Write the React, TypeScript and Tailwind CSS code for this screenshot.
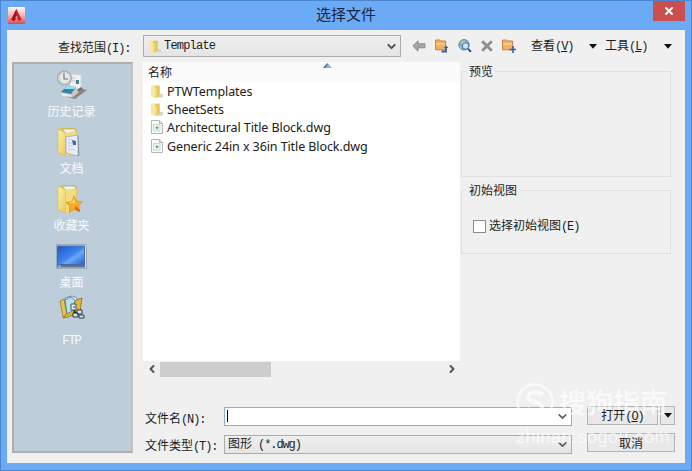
import type { ReactNode } from "react";
import { ChevronDown, ChevronLeft, ChevronRight, X } from "lucide-react";

const places = [
  { label: "历史记录", icon: HistoryIcon },
  { label: "文档", icon: DocumentsIcon },
  { label: "收藏夹", icon: FavoritesIcon },
  { label: "桌面", icon: DesktopIcon },
  { label: "FTP", icon: FtpIcon },
];

const files = [
  { name: "PTWTemplates", folder: true },
  { name: "SheetSets", folder: true },
  { name: "Architectural Title Block.dwg", folder: false },
  { name: "Generic 24in x 36in Title Block.dwg", folder: false },
];

// Half-width latin text that sits next to the 12px chinese labels
function Latin({ children }: { children: ReactNode }) {
  return <span className="font-['Liberation_Mono',monospace] text-[12px] tracking-[-1.1px]">{children}</span>;
}

function AppIcon() {
  return (
    <svg width="17" height="17" viewBox="0 0 17 17">
      <defs>
        <linearGradient id="app" x1="0" y1="0" x2="0" y2="1">
          <stop offset="0" stopColor="#fdfafa" />
          <stop offset="0.5" stopColor="#f2b6b4" />
          <stop offset="1" stopColor="#d84a4c" />
        </linearGradient>
      </defs>
      <rect width="17" height="17" rx="1" fill="url(#app)" />
      <path d="M8.4 2 13.8 12.8 10.8 14 8.5 10.7 6.2 14 3.2 12.8Z" fill="#c9242c" />
      <path d="M8.4 2 8.5 10.7 6.2 14 3.2 12.8Z" fill="#a9101b" />
      <path d="M7 11 8.5 8.7 10 11Z" fill="#e99a9a" />
    </svg>
  );
}

function FolderIcon() {
  return (
    <svg width="14" height="15" viewBox="0 0 14 15" className="shrink-0">
      <path d="M6 10h7v3.5H6z" fill="#d8dad6" />
      <path d="M1 1.8 5 1v13L1 12.5Z" fill="#f7e9a4" />
      <path d="M5 1.8 9.8 1.5v11L5 14Z" fill="#e6c75c" />
      <path d="M4.5 4 6.8 4v9.5L5 14Z" fill="#f3dd80" />
      <path d="M9.3 10h3v3H7.5l1.8-1Z" fill="#ddd3ae" />
    </svg>
  );
}

function DwgIcon() {
  return (
    <svg width="12" height="14" viewBox="0 0 12 14" className="shrink-0">
      <path d="M.5.5h8l3 3v10H.5Z" fill="#fbfbfb" stroke="#b3b6b4" />
      <path d="M8.5.5v3h3" fill="none" stroke="#b3b6b4" />
      <path d="M2.5 4.5H9V11H2.5Z" fill="#eef5ee" stroke="#c8dccb" />
      <path d="M4.5 7.7h3M6 6.4v2.8" stroke="#5fa371" strokeWidth="1.3" />
    </svg>
  );
}

function HistoryIcon() {
  return (
    <svg width="32" height="32" viewBox="0 0 32 32">
      <path d="m5 26 10-9 16 4-12 9Z" fill="#8c8780" />
      <path d="m3 24 10-8 15 3-11 9Z" fill="#c9c8c2" />
      <path d="m14 5 11 1v14l-11-2Z" fill="#edf1ef" stroke="#d2dadd" />
      <path d="m5 23 6-6 9 1-5 7Z" fill="#2f83b5" />
      <path d="m8 20 3-3 9 1-2 2Z" fill="#9fe0ec" />
      <path d="m5 24 10 2 1 2-10-1Z" fill="#e8eef0" />
      <path d="M16 9h3M16 12h4" stroke="#b8c4c8" />
      <path d="M20 11h3v4h-3z" fill="#557d92" />
      <circle cx="8.5" cy="9" r="7" fill="#ccd5d6" stroke="#9ba8ab" strokeWidth="1.1" />
      <circle cx="8.5" cy="9" r="5" fill="#e6e9e2" />
      <path d="M8 4v6h4" fill="none" stroke="#6b7777" strokeWidth="1.1" />
      <path d="m21 21 4-3 2 2-4 3Z" fill="#6f7172" />
    </svg>
  );
}

function BigFolder({ children }: { children: ReactNode }) {
  return (
    <svg width="32" height="32" viewBox="0 0 32 32">
      <defs>
        <linearGradient id="folder" x1="0" y1="0" x2="1" y2="1">
          <stop offset="0" stopColor="#fcf2ad" />
          <stop offset="1" stopColor="#e8c95c" />
        </linearGradient>
      </defs>
      <path d="M3 2h16l2 2v23l-11 3-7-3Z" fill="#dfc569" />
      <path d="M6 3 19 3l1 3-10 2Z" fill="#eef2ec" stroke="#aa9752" strokeWidth=".6" />
      <path d="M2 3 10 7v23l-8-3Z" fill="url(#folder)" stroke="#cbb45c" strokeWidth=".6" />
      <path d="m10 7 10-2v22l-10 3Z" fill="#f2dc7d" />
      {children}
    </svg>
  );
}

function DocumentsIcon() {
  return (
    <BigFolder>
      <path d="m10 11 12-2v21l-12-3Z" fill="#e9edf9" stroke="#a3abc3" strokeWidth=".8" />
      <path d="m12 14 4-.5M12 17h4M12 20h5M12 23l7 1" stroke="#cdc6da" />
      <path d="m16 14 4 1v4h-3Z" fill="#416d9e" />
      <path d="m22 10 1 19-2 1" fill="none" stroke="#8993a5" />
    </BigFolder>
  );
}

function FavoritesIcon() {
  return (
    <BigFolder>
      <path
        d="m18 13 2.5 5.3 5.8.4-3.9 4.3 1.3 5.8-5.2-2.5-5.2 3.1.4-5.8-3.4-4.1 5.8-1Z"
        fill="#f7ad28"
        stroke="#d98a22"
        strokeWidth=".7"
      />
      <path d="m18 15 1.3 4.8-3 .4-4-.8 3.8-.5Z" fill="#ffe05c" />
      <path d="m19.3 23 4.3 3.2v2.5l-5.1-2.4Z" fill="#df6920" />
    </BigFolder>
  );
}

function DesktopIcon() {
  return (
    <svg width="32" height="26" viewBox="0 0 32 26" className="mt-[3px]">
      <defs>
        <linearGradient id="screen" x1="0" y1="0" x2="1" y2="1">
          <stop offset="0" stopColor="#2456c4" />
          <stop offset="0.5" stopColor="#3c83ee" />
          <stop offset="0.62" stopColor="#6aa9f7" />
          <stop offset="1" stopColor="#1f5fd8" />
        </linearGradient>
      </defs>
      <rect x=".5" y=".5" width="30" height="24" fill="#d9e6ec" stroke="#9aabb9" />
      <rect x="1.5" y="2" width="27" height="18.5" fill="url(#screen)" stroke="#4a68a8" />
      <path d="M1 21h28v2.5H1z" fill="#5c6e8a" />
      <path d="M2 22h3" stroke="#b9cbdc" />
    </svg>
  );
}

function FtpIcon() {
  return (
    <svg width="26" height="26" viewBox="0 0 26 26">
      <path d="M1 6 5 4l3 16-4 2Z" fill="#e7c551" stroke="#927a2c" strokeWidth=".8" />
      <path d="m6 3 7-2 5 2 4 15-13 2Z" fill="#e4f1f7" stroke="#587b97" strokeWidth=".8" />
      <path d="m17 5 6-2-2 14-12 5-5 1 7-9Z" fill="#e0b537" stroke="#866c28" strokeWidth=".8" />
      <path d="m6 5 6-3 4 3-3 11-5 3Z" fill="#b8dfef" stroke="#4f7488" strokeWidth=".8" />
      <path d="M12 9h5v6h-5z" fill="#e8eef0" stroke="#34566a" />
      <path d="M14 12h2M15 15v4h4" stroke="#263d4d" />
      <path d="M18 15h5v4h-5zM14 18h5v4h-5zM20 20h5v3h-5z" fill="#dce4ec" stroke="#263852" />
    </svg>
  );
}

function BackIcon() {
  return (
    <svg width="14" height="12" viewBox="0 0 14 12">
      <path d="M.8 6 6 .8v3h7v4H6v3.4Z" fill="#a8a8a8" stroke="#8b8b8b" />
    </svg>
  );
}

function ToolFolder({ children }: { children: ReactNode }) {
  return (
    <svg width="14" height="14" viewBox="0 0 14 14">
      <path d="M.6 1h4l1.2 1H10.6v8.8H.6Z" fill="#f4b061" stroke="#bd8448" />
      <path d="M1 4.2h9v1.4H1z" fill="#ffd393" />
      {children}
    </svg>
  );
}

function SearchWebIcon() {
  return (
    <svg width="14" height="14" viewBox="0 0 14 14">
      <circle cx="6" cy="5.8" r="5.2" fill="#78a9cf" stroke="#6689a5" />
      <path d="M2 3.8 4 1.5l4 .2-1 2-3 2ZM1 7l3 1-1 2Z" fill="#a9c9a5" />
      <circle cx="7.6" cy="7" r="3.2" fill="#cfe5f5" stroke="#4b78a9" />
      <path d="m10 9.7 3 3.2" stroke="#334e98" strokeWidth="2" />
    </svg>
  );
}

function DeleteIcon() {
  return (
    <svg width="12" height="12" viewBox="0 0 12 12">
      <path d="m1.2 1.2 9.6 9.6M10.8 1.2 1.2 10.8" stroke="#8d8d8d" strokeWidth="2.8" />
    </svg>
  );
}

function Caret() {
  return (
    <svg width="8" height="5" viewBox="0 0 8 5">
      <path d="M0 0h8L4 4.8Z" fill="#111" />
    </svg>
  );
}

function GroupBox({ title, className, children }: { title: string; className: string; children?: ReactNode }) {
  return (
    <fieldset className={`relative border border-[#e0e0e0] ${className}`}>
      <legend className="absolute -top-[9px] left-[4px] bg-[#f0f0f0] px-[3px] leading-4">{title}</legend>
      {children}
    </fieldset>
  );
}

function Watermark() {
  return (
    <div className="pointer-events-none absolute left-[515px] top-[382px] w-[156px] text-white/65">
      <div className="flex h-[38px] items-center">
        <svg width="38" height="38" viewBox="0 0 38 38" fill="none" stroke="currentColor" className="shrink-0">
          <circle cx="19" cy="19" r="17.5" strokeWidth="2.4" />
          <path d="M27 11.5c-5-3-15-2.5-15 2.5 0 6 14 4 14 10 0 5-10 5-15 2" strokeWidth="4" />
        </svg>
        <span className="ml-[5px] whitespace-nowrap text-[27px] font-medium leading-[38px]">搜狗指南</span>
      </div>
      <div className="whitespace-nowrap font-['Liberation_Sans',sans-serif] text-[18px] leading-[32px] tracking-[0.5px]">
        zhinan.sogou.com
      </div>
    </div>
  );
}

export default function App() {
  return (
    <div className="relative flex h-[471px] w-[692px] flex-col overflow-hidden border border-[#4a86ce] bg-[#6babf5] px-[6px] pb-[7px] font-['Noto_Sans_CJK_SC',sans-serif] text-[12px] text-[#1c1c1c]">
      {/* Title bar */}
      <header className="flex h-[29px] shrink-0 items-start">
        <div className="mt-[6px] ml-px w-[45px]">
          <AppIcon />
        </div>
        <h1 className="flex-1 pt-[1px] pr-[14px] text-center text-[15px] leading-[24px] text-[#16263d]">选择文件</h1>
        <button className="flex h-[20px] w-[32px] items-center justify-center bg-[#c9504e]">
          <X size={12} strokeWidth={4} color="#fff" />
        </button>
      </header>

      <main className="flex flex-1 flex-col bg-[#f0f0f0]">
        {/* Look in + toolbar */}
        <div className="flex h-[32px] shrink-0 items-center">
          <div className="ml-[51px] w-[85px] pt-[3px] whitespace-nowrap">
            查找范围<Latin>(I):</Latin>
          </div>
          <div className="flex h-[22px] w-[258px] items-center border border-[#acacac] bg-linear-to-b from-[#efefef] to-[#e5e5e5] pl-[4px] pr-[2px]">
            <FolderIcon />
            <span className="ml-[2px] font-['Liberation_Mono',monospace] text-[12px] leading-none tracking-[-0.8px]">Template</span>
            <ChevronDown size={13} strokeWidth={3.6} className="ml-auto text-[#505050]" />
          </div>
          <div className="ml-[11px] flex w-[104px] items-center justify-between">
            <BackIcon />
            <ToolFolder>
              <path d="M6.5 12.5H11V8" fill="none" stroke="#365bab" strokeWidth="1.8" />
              <path d="m9 9 2.2-2.5L13.4 9Z" fill="#365bab" />
            </ToolFolder>
            <SearchWebIcon />
            <DeleteIcon />
            <ToolFolder>
              <path d="M11 7v7M7.5 10.5H14" stroke="#3d5bab" strokeWidth="1.6" />
            </ToolFolder>
          </div>
          <div className="ml-[15px] flex w-[66px] items-center justify-between">
            <span>查看<Latin>(<u>V</u>)</Latin></span>
            <Caret />
          </div>
          <div className="ml-[8px] flex w-[67px] items-center justify-between">
            <span>工具<Latin>(<u>L</u>)</Latin></span>
            <Caret />
          </div>
        </div>

        <div className="flex flex-1">
          {/* Places bar */}
          <nav className="ml-[5px] h-[391px] w-[121px] shrink-0 border-2 border-[#b0aeac] border-r-[#c4c2c0] bg-[#becdda] pt-[3px] text-white/90">
            {places.map((place) => (
              <div key={place.label} className="flex h-[57px] flex-col items-center">
                <div className={place.label === "FTP" ? "flex h-[35px] items-start pr-[2px]" : "flex h-[35px] items-center pr-[2px]"}>
                  <place.icon />
                </div>
                <span className="pr-[2px] leading-[18px]">
                  {place.label === "FTP" ? <Latin>FTP</Latin> : place.label}
                </span>
              </div>
            ))}
          </nav>

          <div className="ml-[10px] flex flex-1 flex-col">
            <div className="flex h-[316px]">
              {/* File list */}
              <div className="w-[317px]">
                <div className="relative h-[299px] bg-white">
                  <div className="h-[20px] bg-[#fbfbfb] pl-[5px] leading-[20px]">名称</div>
                  <svg width="9" height="5" viewBox="0 0 9 5" className="absolute left-[180px] top-px">
                    <path d="m0 5 4.5-5L9 5Z" fill="#8db9d2" />
                    <path d="m0 5 4.5-5v2L2 5Z" fill="#426b8e" />
                  </svg>
                  <ul>
                    {files.map((file) => (
                      <li key={file.name} className="flex h-[18.2px] items-center">
                        <span className="flex w-[24px] justify-center pl-[3px]">
                          {file.folder ? <FolderIcon /> : <DwgIcon />}
                        </span>
                        <span className="whitespace-nowrap pt-[2px] font-['Noto_Sans',sans-serif] text-[12.5px] leading-[18px] tracking-[-0.09px] text-[#202020]">
                          {file.name}
                        </span>
                      </li>
                    ))}
                  </ul>
                </div>
                <div className="flex h-[16px] items-center">
                  <div className="flex w-[17px] justify-center">
                    <ChevronLeft size={12} strokeWidth={4} className="text-[#555]" />
                  </div>
                  <div className="h-[15px] w-[111px] bg-[#cdcdcd]" />
                  <ChevronRight size={12} strokeWidth={4} className="ml-auto mr-[2px] text-[#555]" />
                </div>
              </div>

              {/* Preview and initial view */}
              <div className="ml-px flex flex-col pt-[9px]">
                <GroupBox title="预览" className="h-[106px] w-[210px]" />
                <GroupBox title="初始视图" className="mt-[13px] h-[64px] w-[210px]">
                  <label className="mt-[27px] ml-[11px] flex items-center">
                    <span className="mr-[3px] size-[13px] border border-[#8b8b8b] bg-white" />
                    <span className="leading-[14px]">选择初始视图<Latin>(E)</Latin></span>
                  </label>
                </GroupBox>
              </div>
            </div>

            {/* File name and type */}
            <div className="mt-[27px] flex h-[20px] items-center">
              <span className="w-[81px] pl-[2px] pt-[7px]">文件名<Latin>(N):</Latin></span>
              <div className="mt-[2px] flex h-[19px] w-[348px] items-center border border-[#8bafd0] bg-white px-[2px]">
                <span className="h-[12px] w-px bg-black" />
                <ChevronDown size={13} strokeWidth={3.4} className="ml-auto text-[#606060]" />
              </div>
              <button className="ml-[15px] h-[19px] w-[71px] border border-[#b4b4b4] bg-[#e8e8e8] leading-[15px]">
                <span className="relative z-10">打开<Latin>(<u>O</u>)</Latin></span>
              </button>
              <button className="ml-[2px] flex h-[19px] w-[15px] items-center justify-center border border-[#b4b4b4] bg-[#e8e8e8]">
                <Caret />
              </button>
            </div>
            <div className="mt-[8px] flex h-[19px] items-center">
              <span className="w-[81px] pl-[2px] pt-[7px]">文件类型<Latin>(T):</Latin></span>
              <div className="mt-[3px] flex h-[19px] w-[348px] items-center border border-[#acacac] bg-linear-to-b from-[#efefef] to-[#e5e5e5] pl-[3px] pr-[2px]">
                <span className="leading-[15px]">图形<Latin> (*.dwg)</Latin></span>
                <ChevronDown size={13} strokeWidth={3.4} className="ml-auto text-[#606060]" />
              </div>
              <button className="ml-[15px] h-[19px] w-[88px] border border-[#b4b4b4] bg-[#e8e8e8] leading-[15px]">
                <span className="relative z-10">取消</span>
              </button>
            </div>
          </div>
        </div>
      </main>

      <Watermark />
    </div>
  );
}
